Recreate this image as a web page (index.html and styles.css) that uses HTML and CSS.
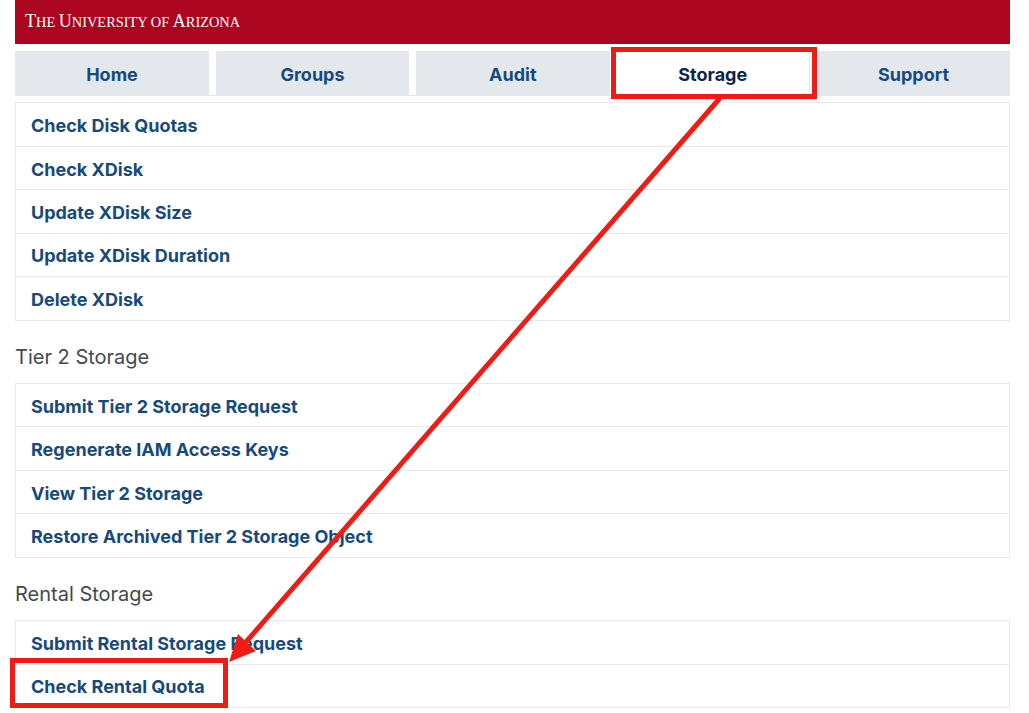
FILE: index.html
```html
<!DOCTYPE html>
<html lang="en">
<head>
<meta charset="utf-8">
<title>Storage</title>
<link rel="stylesheet" href="styles.css">
</head>
<body>
<div class="page">
  <header class="banner"><span class="wordmark"><span class="initial">T</span>HE <span class="initial">U</span>NIVERSITY OF <span class="initial">A</span>RIZONA</span></header>
  <nav class="tabs">
    <a class="tab">Home</a>
    <a class="tab">Groups</a>
    <a class="tab">Audit</a>
    <a class="tab active">Storage</a>
    <a class="tab">Support</a>
  </nav>
  <ul class="list">
    <li class="row">Check Disk Quotas</li>
    <li class="row">Check XDisk</li>
    <li class="row">Update XDisk Size</li>
    <li class="row">Update XDisk Duration</li>
    <li class="row">Delete XDisk</li>
  </ul>
  <h2 class="heading">Tier 2 Storage</h2>
  <ul class="list">
    <li class="row">Submit Tier 2 Storage Request</li>
    <li class="row">Regenerate IAM Access Keys</li>
    <li class="row">View Tier 2 Storage</li>
    <li class="row">Restore Archived Tier 2 Storage Object</li>
  </ul>
  <h2 class="heading">Rental Storage</h2>
  <ul class="list">
    <li class="row">Submit Rental Storage Request</li>
    <li class="row">Check Rental Quota</li>
  </ul>
</div>
<svg class="annotation" width="1029" height="713" viewBox="0 0 1029 713">
  <rect class="mark" x="613.5" y="49.5" width="201" height="47"/>
  <rect class="mark" x="12.5" y="660.5" width="213" height="45"/>
  <line class="arrow-shaft" x1="720" y1="98" x2="246" y2="642"/>
  <polygon class="arrow-head" points="229,662 238,634 256,651"/>
</svg>
</body>
</html>
```
FILE: styles.css
```css
* { box-sizing: border-box; }
html, body { margin: 0; padding: 0; background: #fff; }
body { font-family: Inter, "Liberation Sans", sans-serif; }
.page { width: 1029px; height: 713px; padding: 0 19px 0 15px; overflow: hidden; }
.banner { height: 44px; background: #ab0520; display: flex; align-items: center; padding-left: 10px; }
.wordmark { font-family: "Liberation Serif", serif; font-size: 14.4px; color: #fff; position: relative; top: -1px; white-space: pre; }
.initial { font-size: 18px; }
.tabs { display: grid; grid-template-columns: 194px 193px 193.5px 193.5px 193px; column-gap: 7px; margin-top: 7px; height: 45px; border-bottom: 1px solid #e4e7eb; }
.tab { display: flex; align-items: center; justify-content: center; background: #e4e7eb; color: #164a7e; font-size: 18px; font-weight: 700; height: 44px; padding-top: 2px; }
.tab.active { background: #fff; color: #0c234b; border-right: 1px solid #e4e7eb; }
.list { list-style: none; margin: 6.4px 0 0; padding: 0; border: 1px solid #e6e8eb; border-bottom: 0; }
.row { height: 43.45px; display: flex; align-items: center; padding: 2px 0 0 15px; border-bottom: 1px solid #e6e8eb; color: #164a7e; font-size: 18px; font-weight: 700; }
.heading { margin: 0; height: 62.4px; padding-top: 23.4px; font-size: 20px; line-height: 26px; font-weight: 400; color: #3f4b4e; }
.heading + .list { margin-top: 0; }
.annotation { position: absolute; left: 0; top: 0; pointer-events: none; }
.mark { fill: none; stroke: #ee1c14; stroke-width: 5; }
.arrow-shaft { stroke: #ee1c14; stroke-width: 5; }
.arrow-head { fill: #ee1c14; }
```
